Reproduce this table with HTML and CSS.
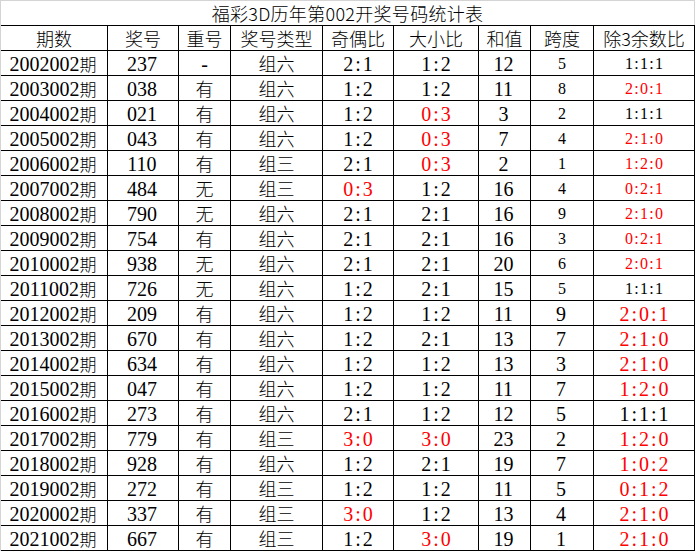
FILE: index.html
```html
<!DOCTYPE html>
<html lang="zh-CN">
<head>
<meta charset="utf-8">
<title>福彩3D历年第002开奖号码统计表</title>
<link rel="stylesheet" href="styles.css">
</head>
<body>
<div class="sheet">
  <div class="title">福彩3D历年第002开奖号码统计表</div>
  <div class="grid">
    <div class="c h">期数</div><div class="c h">奖号</div><div class="c h">重号</div><div class="c h">奖号类型</div><div class="c h">奇偶比</div><div class="c h">大小比</div><div class="c h">和值</div><div class="c h">跨度</div><div class="c h">除3余数比</div>

    <div class="c n">2002002<span class="z">期</span></div><div class="c n">237</div><div class="c dash">-</div><div class="c z">组六</div><div class="c r">2:1</div><div class="c r">1:2</div><div class="c n">12</div><div class="c s">5</div><div class="c rs">1:1:1</div>
    <div class="c n">2003002<span class="z">期</span></div><div class="c n">038</div><div class="c z">有</div><div class="c z">组六</div><div class="c r">1:2</div><div class="c r">1:2</div><div class="c n">11</div><div class="c s">8</div><div class="c rs red">2:0:1</div>
    <div class="c n">2004002<span class="z">期</span></div><div class="c n">021</div><div class="c z">有</div><div class="c z">组六</div><div class="c r">1:2</div><div class="c r red">0:3</div><div class="c n">3</div><div class="c s">2</div><div class="c rs">1:1:1</div>
    <div class="c n">2005002<span class="z">期</span></div><div class="c n">043</div><div class="c z">有</div><div class="c z">组六</div><div class="c r">1:2</div><div class="c r red">0:3</div><div class="c n">7</div><div class="c s">4</div><div class="c rs red">2:1:0</div>
    <div class="c n">2006002<span class="z">期</span></div><div class="c n">110</div><div class="c z">有</div><div class="c z">组三</div><div class="c r">2:1</div><div class="c r red">0:3</div><div class="c n">2</div><div class="c s">1</div><div class="c rs red">1:2:0</div>
    <div class="c n">2007002<span class="z">期</span></div><div class="c n">484</div><div class="c z">无</div><div class="c z">组三</div><div class="c r red">0:3</div><div class="c r">1:2</div><div class="c n">16</div><div class="c s">4</div><div class="c rs red">0:2:1</div>
    <div class="c n">2008002<span class="z">期</span></div><div class="c n">790</div><div class="c z">无</div><div class="c z">组六</div><div class="c r">2:1</div><div class="c r">2:1</div><div class="c n">16</div><div class="c s">9</div><div class="c rs red">2:1:0</div>
    <div class="c n">2009002<span class="z">期</span></div><div class="c n">754</div><div class="c z">有</div><div class="c z">组六</div><div class="c r">2:1</div><div class="c r">2:1</div><div class="c n">16</div><div class="c s">3</div><div class="c rs red">0:2:1</div>
    <div class="c n">2010002<span class="z">期</span></div><div class="c n">938</div><div class="c z">无</div><div class="c z">组六</div><div class="c r">2:1</div><div class="c r">2:1</div><div class="c n">20</div><div class="c s">6</div><div class="c rs red">2:0:1</div>
    <div class="c n">2011002<span class="z">期</span></div><div class="c n">726</div><div class="c z">无</div><div class="c z">组六</div><div class="c r">1:2</div><div class="c r">2:1</div><div class="c n">15</div><div class="c s">5</div><div class="c rs">1:1:1</div>
    <div class="c n">2012002<span class="z">期</span></div><div class="c n">209</div><div class="c z">有</div><div class="c z">组六</div><div class="c r">1:2</div><div class="c r">1:2</div><div class="c n">11</div><div class="c n">9</div><div class="c r red">2:0:1</div>
    <div class="c n">2013002<span class="z">期</span></div><div class="c n">670</div><div class="c z">有</div><div class="c z">组六</div><div class="c r">1:2</div><div class="c r">2:1</div><div class="c n">13</div><div class="c n">7</div><div class="c r red">2:1:0</div>
    <div class="c n">2014002<span class="z">期</span></div><div class="c n">634</div><div class="c z">有</div><div class="c z">组六</div><div class="c r">1:2</div><div class="c r">1:2</div><div class="c n">13</div><div class="c n">3</div><div class="c r red">2:1:0</div>
    <div class="c n">2015002<span class="z">期</span></div><div class="c n">047</div><div class="c z">有</div><div class="c z">组六</div><div class="c r">1:2</div><div class="c r">1:2</div><div class="c n">11</div><div class="c n">7</div><div class="c r red">1:2:0</div>
    <div class="c n">2016002<span class="z">期</span></div><div class="c n">273</div><div class="c z">有</div><div class="c z">组六</div><div class="c r">2:1</div><div class="c r">1:2</div><div class="c n">12</div><div class="c n">5</div><div class="c r">1:1:1</div>
    <div class="c n">2017002<span class="z">期</span></div><div class="c n">779</div><div class="c z">有</div><div class="c z">组三</div><div class="c r red">3:0</div><div class="c r red">3:0</div><div class="c n">23</div><div class="c n">2</div><div class="c r red">1:2:0</div>
    <div class="c n">2018002<span class="z">期</span></div><div class="c n">928</div><div class="c z">有</div><div class="c z">组六</div><div class="c r">1:2</div><div class="c r">2:1</div><div class="c n">19</div><div class="c n">7</div><div class="c r red">1:0:2</div>
    <div class="c n">2019002<span class="z">期</span></div><div class="c n">272</div><div class="c z">有</div><div class="c z">组三</div><div class="c r">1:2</div><div class="c r">1:2</div><div class="c n">11</div><div class="c n">5</div><div class="c r red">0:1:2</div>
    <div class="c n">2020002<span class="z">期</span></div><div class="c n">337</div><div class="c z">有</div><div class="c z">组三</div><div class="c r red">3:0</div><div class="c r">1:2</div><div class="c n">13</div><div class="c n">4</div><div class="c r red">2:1:0</div>
    <div class="c n">2021002<span class="z">期</span></div><div class="c n">667</div><div class="c z">有</div><div class="c z">组三</div><div class="c r">1:2</div><div class="c r red">3:0</div><div class="c n">19</div><div class="c n">1</div><div class="c r red">2:1:0</div>
  </div>
</div>
</body>
</html>
```
FILE: styles.css
```css
html, body {
  margin: 0;
  padding: 0;
  background: #fff;
}
.sheet {
  width: 694px;
  border-top: 1px solid #d4d4d4;
  border-left: 1px solid #d4d4d4;
  font-family: "Liberation Serif", "Noto Sans CJK SC", serif;
  color: #000;
}
.title {
  height: 24px;
  line-height: 24px;
  border-right: 1px solid #d4d4d4;
  text-align: center;
  font-family: "Noto Sans CJK SC", sans-serif;
  font-weight: 300;
  font-size: 18px;
  letter-spacing: 0.3px;
}
.grid {
  display: grid;
  grid-template-columns: 106px 70px 51px 91px 70px 84px 51px 62px 100px;
  grid-auto-rows: 24px;
  gap: 1px;
  padding: 1px 1px 1px 0;
  background: #000;
}
.c {
  background: #fff;
  text-align: center;
  line-height: 26px;
  white-space: nowrap;
  overflow: hidden;
}
.h, .z {
  font-family: "Noto Sans CJK SC", sans-serif;
  font-weight: 300;
  font-size: 18px;
  line-height: 24px;
}
.n {
  font-size: 20px;
  text-indent: -2px;
}
.n .z {
  font-size: 17px;
  line-height: 1;
}
.dash {
  font-size: 20px;
}
.r {
  font-size: 20px;
  letter-spacing: 2px;
  text-indent: 2px;
}
.s {
  font-size: 16px;
}
.rs {
  font-size: 16px;
  letter-spacing: 1.3px;
  text-indent: 1.3px;
}
.red {
  color: #ff0000;
}
```
